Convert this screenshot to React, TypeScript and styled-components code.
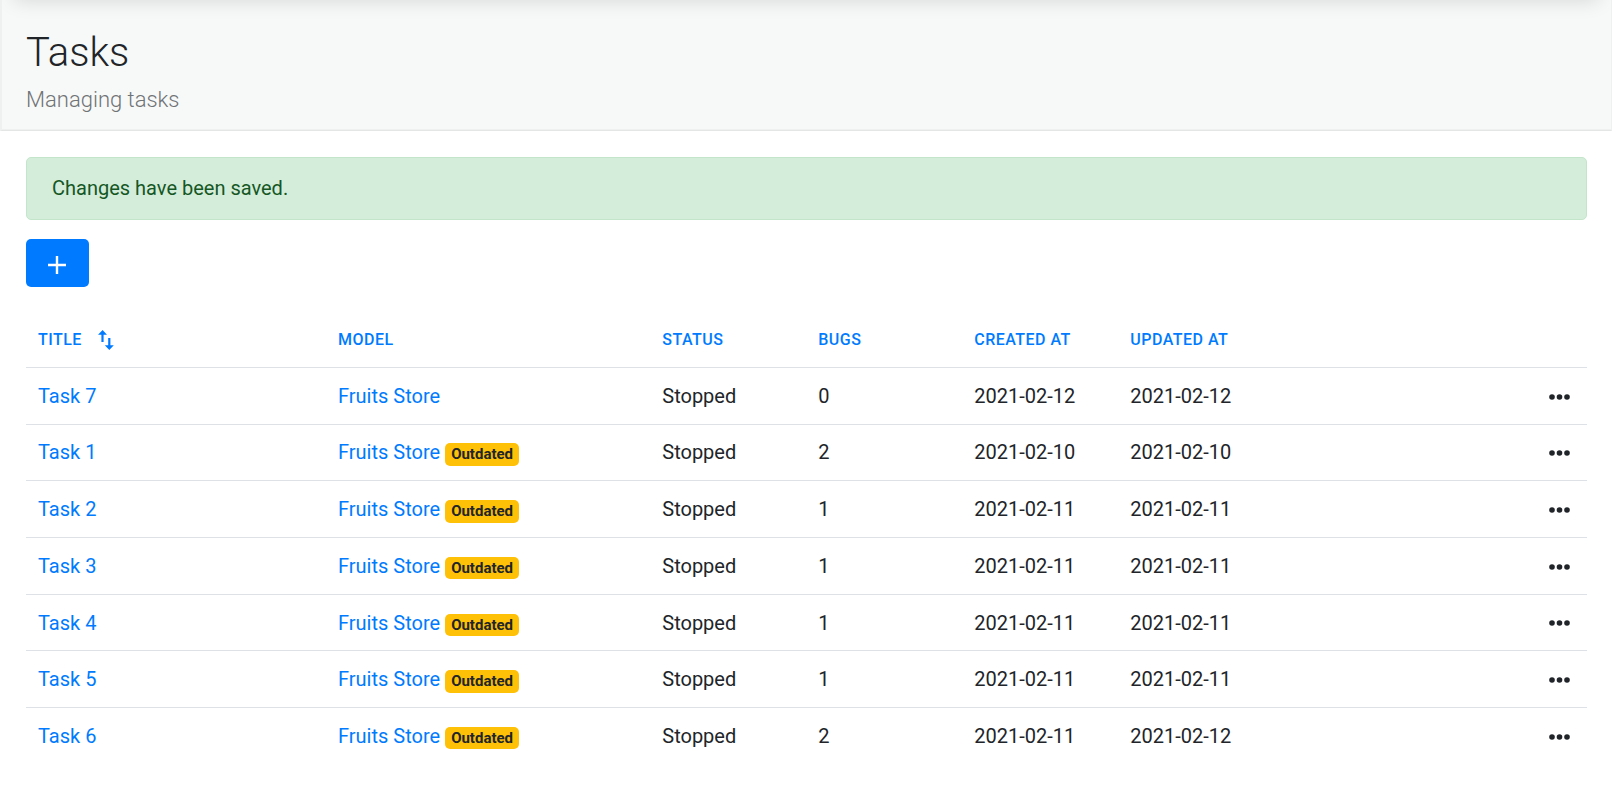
import React from "react";
import styled, { createGlobalStyle } from "styled-components";

const GlobalStyle = createGlobalStyle`
  * { box-sizing: border-box; }
  body {
    margin: 0;
    background: #fff;
    color: #212529;
    font: 400 20px/30px Roboto, sans-serif;
  }
`;

const Header = styled.header`
  position: relative;
  height: 131px;
  padding: 28px 25px 0 24px;
  overflow: hidden;
  background: #f7f9f8;
  border: solid #eff1f0;
  border-width: 0 1px 1px 2px;
  border-bottom-color: #e3e6e5;
  box-shadow: inset 0 -1px 0 #eff1f0;

  &::before {
    content: "";
    position: absolute;
    top: -20px;
    left: 12px;
    right: 12px;
    height: 20px;
    box-shadow: 0 0 20px rgba(0, 0, 0, 0.15);
  }
`;

const Heading = styled.h1`
  margin: 0;
  font-size: 40px;
  line-height: 50px;
  font-weight: 300;
`;

const Lead = styled.p`
  margin: 6px 0 0;
  font-size: 22px;
  line-height: 32px;
  font-weight: 300;
  color: #707376;
`;

const Content = styled.main`
  padding: 26px 25px 0 26px;
`;

const Alert = styled.div`
  height: 63px;
  padding: 15px 25px;
  border: 1px solid #c3e6cb;
  border-radius: 5px;
  background: #d4edda;
  color: #155724;
`;

const AddButton = styled.button`
  display: flex;
  align-items: center;
  justify-content: center;
  width: 63px;
  height: 48px;
  margin: 19px 0 25px;
  padding: 4px 1px 0 0;
  border: 0;
  border-radius: 5px;
  background: #007bff;
  color: #fff;
`;

const Table = styled.table`
  width: 100%;
  border-collapse: separate;
  border-spacing: 0;
  table-layout: fixed;
`;

const HeadCell = styled.th<{ $width?: number }>`
  width: ${(p) => (p.$width ? `${p.$width}px` : "auto")};
  height: 55px;
  padding: 0 12px;
  text-align: left;
  font-size: 16px;
  line-height: 24px;
  font-weight: 500;
  letter-spacing: 0.48px;
  color: #007bff;

  &:nth-child(n + 3) {
    padding-left: 12.25px;
  }
`;

const SortLabel = styled.span`
  display: flex;
  align-items: center;
  gap: 16px;
`;

const Row = styled.tr`
  height: 56.69px;
`;

const Cell = styled.td<{ $align?: "right" }>`
  padding: 0 12.4px 0.12px 12px;
  border-top: 1px solid #dee2e6;
  text-align: ${(p) => p.$align ?? "left"};
  white-space: nowrap;

  &:nth-child(n + 3) {
    padding-left: 12.25px;
  }
`;

const Link = styled.a`
  color: #007bff;
  text-decoration: none;
`;

const Badge = styled.span`
  display: inline-block;
  height: 22.5px;
  margin-left: 5px;
  padding: 0 6px;
  border-radius: 5px;
  background: #ffc107;
  font-size: 15px;
  line-height: 22.5px;
  font-weight: 700;
`;

const MoreButton = styled.button`
  display: inline-flex;
  padding: 0 4px 2px 0;
  border: 0;
  background: none;
  color: #212529;
  vertical-align: middle;
`;

const tasks = [
  { title: "Task 7", outdated: false, bugs: 0, created: "2021-02-12", updated: "2021-02-12" },
  { title: "Task 1", outdated: true, bugs: 2, created: "2021-02-10", updated: "2021-02-10" },
  { title: "Task 2", outdated: true, bugs: 1, created: "2021-02-11", updated: "2021-02-11" },
  { title: "Task 3", outdated: true, bugs: 1, created: "2021-02-11", updated: "2021-02-11" },
  { title: "Task 4", outdated: true, bugs: 1, created: "2021-02-11", updated: "2021-02-11" },
  { title: "Task 5", outdated: true, bugs: 1, created: "2021-02-11", updated: "2021-02-11" },
  { title: "Task 6", outdated: true, bugs: 2, created: "2021-02-11", updated: "2021-02-12" },
];

const PlusIcon = () => (
  <svg width="18" height="18" viewBox="0 0 18 18" fill="currentColor">
    <path d="M7.8 0h2.4v7.8H18v2.4h-7.8V18H7.8v-7.8H0V7.8h7.8z" />
  </svg>
);

const SortIcon = () => (
  <svg width="16" height="20" viewBox="0 0 16 20" fill="currentColor">
    <path d="M4.6 0 9 4.7H5.6V12H3.4V4.7H0zM10.2 8h2.2v7.3h3.4L11.3 20l-4.5-4.7h3.4z" />
  </svg>
);

const MoreIcon = () => (
  <svg width="22" height="6" viewBox="0 0 22 6" fill="currentColor">
    <circle cx="3" cy="3" r="2.8" />
    <circle cx="10.5" cy="3" r="2.8" />
    <circle cx="18" cy="3" r="2.8" />
  </svg>
);

export default function App() {
  return (
    <>
      <GlobalStyle />
      <Header>
        <Heading>Tasks</Heading>
        <Lead>Managing tasks</Lead>
      </Header>
      <Content>
        <Alert role="alert">Changes have been saved.</Alert>
        <AddButton aria-label="Add task">
          <PlusIcon />
        </AddButton>
        <Table>
          <thead>
            <tr>
              <HeadCell $width={300}>
                <SortLabel>
                  TITLE
                  <SortIcon />
                </SortLabel>
              </HeadCell>
              <HeadCell $width={324}>MODEL</HeadCell>
              <HeadCell $width={156}>STATUS</HeadCell>
              <HeadCell $width={156}>BUGS</HeadCell>
              <HeadCell $width={156}>CREATED AT</HeadCell>
              <HeadCell $width={156}>UPDATED AT</HeadCell>
              <HeadCell />
            </tr>
          </thead>
          <tbody>
            {tasks.map((task) => (
              <Row key={task.title}>
                <Cell>
                  <Link>{task.title}</Link>
                </Cell>
                <Cell>
                  <Link>Fruits Store</Link>
                  {task.outdated && <Badge>Outdated</Badge>}
                </Cell>
                <Cell>Stopped</Cell>
                <Cell>{task.bugs}</Cell>
                <Cell>{task.created}</Cell>
                <Cell>{task.updated}</Cell>
                <Cell $align="right">
                  <MoreButton aria-label="More actions">
                    <MoreIcon />
                  </MoreButton>
                </Cell>
              </Row>
            ))}
          </tbody>
        </Table>
      </Content>
    </>
  );
}
